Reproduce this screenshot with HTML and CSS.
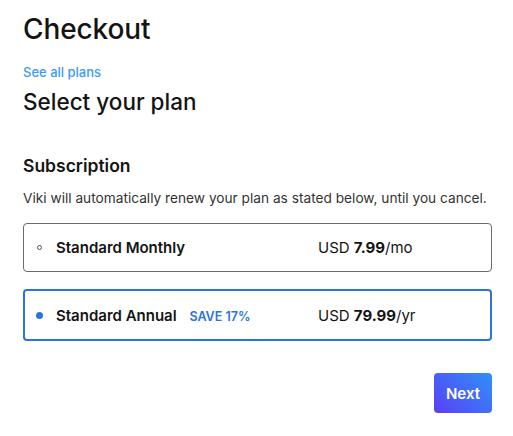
FILE: index.html
```html
<!DOCTYPE html>
<html lang="en">
<head>
<meta charset="utf-8">
<title>Checkout</title>
<link rel="stylesheet" href="styles.css">
</head>
<body>
<main class="checkout">
  <h1 class="title">Checkout</h1>
  <a class="see-all" href="#">See all plans</a>
  <h2 class="subtitle">Select your plan</h2>
  <section class="subscription">
    <h3 class="sub-title">Subscription</h3>
    <p class="sub-desc">Viki will automatically renew your plan as stated below, until you cancel.</p>
    <div class="plans">
      <label class="plan">
        <span class="radio"></span>
        <span class="plan-name">Standard Monthly</span>
        <span class="plan-price">USD <b>7.99</b>/mo</span>
      </label>
      <label class="plan plan-selected">
        <span class="radio radio-on"></span>
        <span class="plan-name">Standard Annual <span class="save">SAVE 17%</span></span>
        <span class="plan-price">USD <b>79.99</b>/yr</span>
      </label>
    </div>
    <div class="actions">
      <button class="next" type="button">Next</button>
    </div>
  </section>
</main>
</body>
</html>
```
FILE: styles.css
```css
* { box-sizing: border-box; }
body {
  margin: 0;
  background: #fff;
  font-family: Inter, "Noto Sans", sans-serif;
  color: #141414;
}
.checkout {
  padding: 12px 21px 0 23px;
  display: flex;
  flex-direction: column;
}
.title {
  margin: 0;
  font-size: 28px;
  line-height: 34px;
  font-weight: 500;
  letter-spacing: -0.1px;
}
.see-all {
  margin-top: 18px;
  font-size: 13px;
  line-height: 16px;
  color: #3a9af9;
  text-decoration: none;
  font-weight: 500;
}
.subtitle {
  margin: 8px 0 0;
  font-size: 22.5px;
  line-height: 28px;
  font-weight: 500;
}
.subscription {
  margin-top: 38px;
  display: flex;
  flex-direction: column;
}
.sub-title {
  margin: 0;
  font-size: 17.5px;
  line-height: 23px;
  font-weight: 600;
}
.sub-desc {
  margin: 12px 0 0;
  font-size: 13.7px;
  line-height: 18px;
  color: #333;
}
.plans {
  margin-top: 16px;
  display: flex;
  flex-direction: column;
  gap: 17px;
}
.plan {
  display: grid;
  grid-template-columns: 10px 258px 1fr;
  align-items: center;
  column-gap: 8px;
  height: 49px;
  padding: 0 10px;
  border: 1px solid #6b6b6b;
  border-radius: 4px;
  font-size: 15px;
}
.plan-selected {
  height: 52px;
  border: 2px solid #2a74db;
  padding: 0 9px;
}
.radio {
  width: 5px;
  height: 5px;
  border: 1px solid #555;
  border-radius: 50%;
  justify-self: center;
}
.radio-on {
  width: 7px;
  height: 7px;
  border: none;
  background: #2a74db;
}
.plan-name {
  padding-left: 4px;
  font-weight: 600;
  color: #141414;
}
.save {
  margin-left: 9px;
  font-size: 12.5px;
  font-weight: 600;
  color: #2a74db;
}
.plan-price {
  color: #141414;
}
.plan-price b { font-weight: 700; }
.actions {
  margin-top: 32px;
  display: flex;
  justify-content: flex-end;
}
.next {
  width: 58px;
  height: 40px;
  border: none;
  border-radius: 4px;
  background: linear-gradient(45deg, #5a3ff6 0%, #2f90f8 100%);
  color: #fff;
  font-family: inherit;
  font-size: 15px;
  font-weight: 600;
}
```
